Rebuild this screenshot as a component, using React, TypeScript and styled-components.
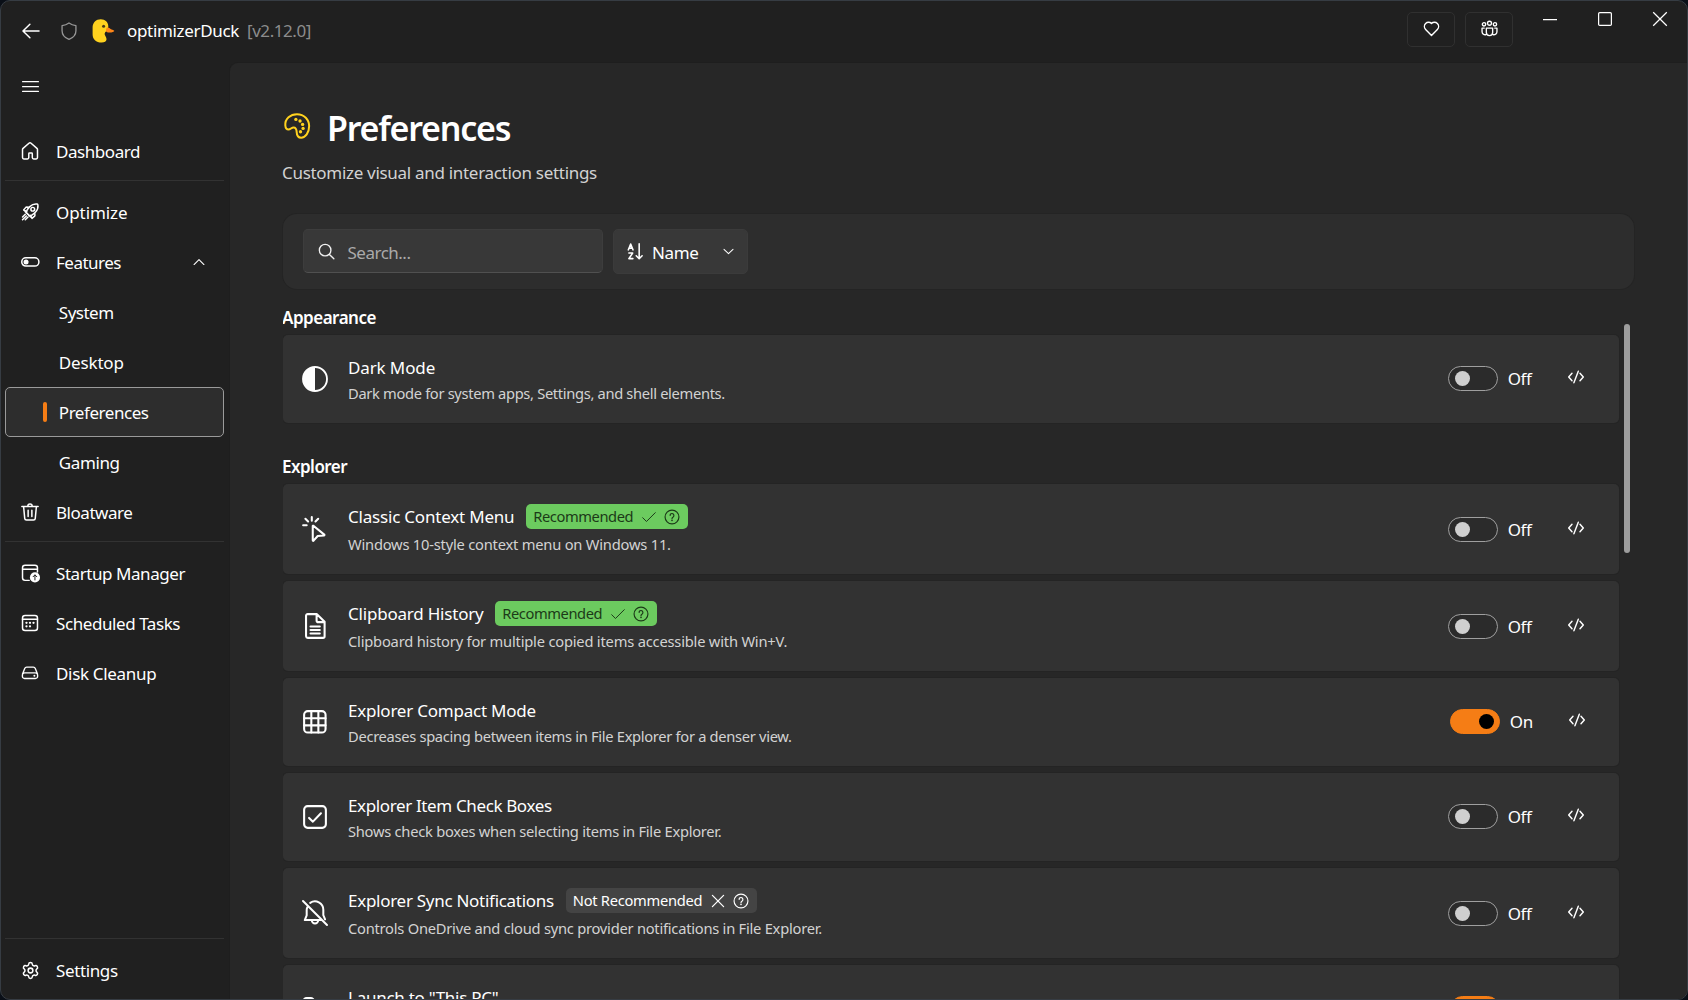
import React from "react";
import styled, { createGlobalStyle, css } from "styled-components";
import { Settings as GearIcon } from "lucide-react";

const c = {
  desk: "#0a0f17",
  window: "#202020",
  frame: "#363c43",
  panel: "#272727",
  seam: "#1e1e1e",
  toolbar: "#2d2d2d",
  field: "#383838",
  card: "#323232",
  line: "#323232",
  text: "#ffffff",
  soft: "#d2d2d2",
  orange: "#f57d15",
  green: "#6ccb5f",
  gold: "#ffd21e",
};

const GlobalStyle = createGlobalStyle`
  *, *::before, *::after { box-sizing: border-box; }
  html, body { margin: 0; background: ${c.desk}; }
  body {
    font-family: "Noto Sans", "Open Sans", sans-serif;
    font-size: 17px;
    line-height: 24px;
    color: ${c.text};
    overflow: hidden;
  }
  svg { display: block; flex: none; }
  button { font: inherit; color: inherit; background: none; border: 0; padding: 0; margin: 0; text-align: left; }
`;

/* ---------- icons ---------- */

const Glyph = styled.svg.attrs<{ $size?: number; $weight?: number }>((p) => ({
  viewBox: "0 0 20 20",
  width: p.$size ?? 22,
  height: p.$size ?? 22,
}))<{ $size?: number; $weight?: number }>`
  fill: none;
  stroke: currentColor;
  stroke-width: ${(p) => p.$weight ?? 1.35};
  stroke-linecap: round;
  stroke-linejoin: round;

  .solid { fill: currentColor; stroke: none; }
`;

const HomeGlyph = () => (
  <Glyph>
    <path d="M9 2.9a1.5 1.5 0 0 1 2 0l5.3 4.7c.32.28.5.69.5 1.12v7.3a1.2 1.2 0 0 1-1.2 1.2h-2.3a1.2 1.2 0 0 1-1.2-1.2v-3.6a.6.6 0 0 0-.6-.6h-2a.6.6 0 0 0-.6.6v3.6a1.2 1.2 0 0 1-1.2 1.2H4.400a1.2 1.2 0 0 1-1.2-1.2v-7.3c0-.43.18-.83.5-1.12L9 2.9Z" />
  </Glyph>
);

const RocketGlyph = () => (
  <Glyph>
    <path d="M7.2 11.2c-.9-1.2.6-4.1 2.6-6.1 2-1.9 4.6-2.6 6.7-2.3.4.1.6.3.7.7.3 2.100-.4 4.700-2.300 6.700-2 2-4.900 3.500-6.100 2.600Z" />
    <circle cx="12.500" cy="7.500" r="1.700" />
    <path d="M8.700 5.700 7 5.500c-.3 0-.6.1-.8.3L4.200 8.200l2.700 1.300M14.300 11.300l.2 1.700c0 .3-.1.6-.3.8l-2.400 2-1.300-2.700M5.500 9.500l5 5M5.700 12l-2.500 2.500M6.700 13.600l-3.500 3.500M8.200 14.600l-2.500 2.500" />
  </Glyph>
);

const ToggleGlyph = () => (
  <Glyph>
    <rect x="2.500" y="6.200" width="15.600" height="7.500" rx="3.750" />
    <circle className="solid" cx="6.400" cy="9.950" r="2.300" />
  </Glyph>
);

const TrashGlyph = () => (
  <Glyph>
    <path d="M2.600 5h14.800M8 4.800a2 2 0 0 1 4 0M4.200 5.200l1 10.600a1.600 1.600 0 0 0 1.600 1.500h6.400a1.600 1.600 0 0 0 1.600-1.500l1-10.600M8.300 8.300v5.800M11.700 8.300v5.800" />
  </Glyph>
);

const StartupGlyph = () => (
  <Glyph>
    <path d="M9.300 16.700H5.500a2.300 2.300 0 0 1-2.300-2.300V5.300A2.300 2.300 0 0 1 5.500 3h9a2.300 2.300 0 0 1 2.300 2.300V9M3.200 6.600h13.600" />
    <circle className="solid" cx="14.500" cy="14" r="4.600" />
    <path stroke="#202020" strokeWidth="0.9" d="M14.500 16.300v-4.400M12.800 13.400l1.700-1.700 1.700 1.700" />
  </Glyph>
);

const CalendarGlyph = () => (
  <Glyph>
    <rect x="3.200" y="3.200" width="13.600" height="13.600" rx="2.300" />
    <path d="M3.200 6.600h13.600" />
    {[[6.800, 9.800], [10, 9.800], [13.200, 9.800], [6.800, 13], [10, 13]].map(([x, y]) => (
      <circle key={`${x}-${y}`} className="solid" cx={x} cy={y} r="1.050" />
    ))}
  </Glyph>
);

const DriveGlyph = () => (
  <Glyph $weight={1.25}>
    <path d="M3.200 10.900 5.200 5.900a1.900 1.900 0 0 1 1.800-1.200h6a1.900 1.900 0 0 1 1.800 1.200l2 5M5 9.900h10a1.900 1.900 0 0 1 1.900 1.900v1.300a1.900 1.900 0 0 1-1.900 1.900H5a1.900 1.900 0 0 1-1.900-1.900v-1.300A1.900 1.900 0 0 1 5 9.900Z" />
    <circle className="solid" cx="14" cy="12.500" r=".9" />
  </Glyph>
);

const BackGlyph = () => (
  <Glyph>
    <path d="M17.300 10H3M9 3.800 2.700 10 9 16.200" />
  </Glyph>
);

const ShieldGlyph = () => (
  <Glyph $weight={1.2}>
    <path d="M10 2.700c1.900 1.400 4.100 2.200 6.300 2.500v4.500c0 3.600-2 6.200-6.300 7.900-4.300-1.700-6.300-4.300-6.300-7.900V5.200C5.900 4.900 8.100 4.100 10 2.700Z" />
  </Glyph>
);

const MenuGlyph = () => (
  <svg width="17" height="11" viewBox="0 0 17 11" fill="#fff">
    <rect width="17" height="1.200" rx=".5" />
    <rect y="5" width="17" height="1.200" rx=".5" />
    <rect y="9.800" width="17" height="1.200" rx=".5" />
  </svg>
);

const DuckLogo = () => (
  <svg width="23" height="24" viewBox="0 0 23 24">
    <path fill="#ffd21e" d="M8.800.3c4.400 0 7.500 3.100 7.500 7 0 2.300-.8 3.800-2.300 5.100-1.300 1.200-1.700 2.200-1 3.800.6 1.400 1.700 2.600 1.500 4.400-.2 1.800-1.900 2.900-4.800 2.900C3.900 23.500.6 20.200.6 15.200V8.500C.6 3.700 4 .3 8.800.3Z" />
    <path fill="#ff8618" d="M15.900 8.500c1.200.2 2.400 1.300 3.700 2.100 1.100.6 2.700.6 2.700 1.500 0 .9-2.400 1.500-4.600 1.500-2 0-3.600-.5-3.700-1.700-.1-1.300.4-3.600 1.900-3.400Z" />
    <circle cx="11.600" cy="7.200" r="1.500" fill="#4a3a18" />
  </svg>
);

const HeartGlyph = () => (
  <Glyph $size={21}>
    <path d="M10 5.300a3.900 3.900 0 0 0-5.600 0 4 4 0 0 0 0 5.600l5.600 5.700 5.600-5.700a4 4 0 0 0 0-5.600 3.900 3.900 0 0 0-5.600 0Z" />
  </Glyph>
);

const PeopleGlyph = () => (
  <Glyph $size={21} $weight={1.3}>
    <circle cx="10" cy="5" r="1.900" />
    <circle cx="4.800" cy="6" r="1.600" />
    <circle cx="15.200" cy="6" r="1.600" />
    <path d="M7 9.600h6v4.200a3 3 0 0 1-6 0ZM5 9.600H2.900v3.200c0 2 1.500 3.300 3.400 3.200M15 9.600h2.100v3.200c0 2-1.500 3.300-3.400 3.200" />
  </Glyph>
);

const PaletteGlyph = () => (
  <Glyph $size={32} $weight={1.25}>
    <path d="M2.700 9.600C2.400 5.500 5.900 2.600 10 2.600c4.500 0 7.600 3.400 7.600 7.400 0 4.300-2.400 7.300-5 7.300-1.900 0-2.700-1.400-2.800-3.500-.1-2.100-.8-2.900-1.900-2.900-1.400 0-1.900 1.300-3.200 1.300-1.200 0-1.900-1.200-2-2.600Z" />
    {[[9.300, 5.900], [11.900, 6.900], [13.500, 9], [13.800, 11.500], [12.200, 13.600]].map(([x, y]) => (
      <circle key={`${x}-${y}`} className="solid" cx={x} cy={y} r="1.050" />
    ))}
  </Glyph>
);

const SearchGlyph = () => (
  <Glyph $size={21} $weight={1.3}>
    <circle cx="8.700" cy="8.700" r="5.500" />
    <path d="m12.800 12.800 4.200 4.200" />
  </Glyph>
);

const SortGlyph = () => (
  <Glyph $size={21} $weight={1.5}>
    <path d="m3.200 8.400 2.200-5.600 2.200 5.600M4 6.800h2.800M3.700 11.500h3.600L3.700 16.800h3.800M13.500 2.600v14M10.700 14.100l2.800 2.800 2.800-2.800" />
  </Glyph>
);

const Chevron = ({ up }: { up?: boolean }) => (
  <Glyph $size={up ? 18 : 17} $weight={1.2}>
    <path d={up ? "m4.500 12.800 5.500-5.500 5.500 5.500" : "M4.700 7.500 10 12.500l5.300-5"} />
  </Glyph>
);

const CheckGlyph = () => (
  <Glyph $size={18} $weight={1.1}>
    <path d="m3 10.800 4.200 4.200 9.800-9.800" />
  </Glyph>
);

const CrossGlyph = () => (
  <Glyph $size={18} $weight={1.4}>
    <path d="m3.800 3.800 12.400 12.400M16.200 3.800 3.800 16.200" />
  </Glyph>
);

const HelpGlyph = () => (
  <Glyph $size={18} $weight={1.3}>
    <circle cx="10" cy="10" r="7.700" />
    <path d="M7.900 8.200a2.100 2.100 0 1 1 3.400 1.700c-.8.600-1.300 1-1.300 1.900" />
    <circle className="solid" cx="10" cy="13.800" r=".9" />
  </Glyph>
);

const CodeGlyph = () => (
  <Glyph $size={20} $weight={1.45}>
    <path d="M6 6.200 2.700 10 6 13.800M14 6.200l3.300 3.800-3.300 3.800M12.300 4.300 7.900 15.700" />
  </Glyph>
);

const ContrastGlyph = () => (
  <Glyph $size={32} $weight={1.15}>
    <circle cx="10" cy="10" r="7.500" />
    <path className="solid" d="M10 2.500a7.500 7.500 0 0 0 0 15Z" />
  </Glyph>
);

const ClickGlyph = () => (
  <Glyph $size={32} $weight={1.3}>
    <path d="M8.600 8.200v8.900c0 .3.300.400.5.200l2.600-2.900 3.900-.3c.3 0 .4-.4.2-.6L9 8c-.2-.100-.4 0-.4.200Z" />
    <path d="M2.600 7.700h2.200M4 3.600l1.700 1.700M8 2.500v2.300M12 3.600l-1.700 1.700" />
  </Glyph>
);

const DocumentGlyph = () => (
  <Glyph $size={32} $weight={1.3}>
    <path d="M5.500 2.600h5.700l4.800 4.800v9a1 1 0 0 1-1 1H5.500a1.100 1.100 0 0 1-1.100-1V3.600a1 1 0 0 1 1.100-1ZM11 2.800v3.700a1.100 1.100 0 0 0 1.100 1.100h3.700M7.200 10.300h5.800M7.200 12.500h5.800M7.200 14.700h5.800" />
  </Glyph>
);

const GridGlyph = () => (
  <Glyph $size={32} $weight={1.3}>
    <rect x="3.200" y="3.200" width="13.400" height="13.400" rx="2.300" />
    <path d="M7.700 3.200v13.400M12.100 3.200v13.400M3.200 7.700h13.400M3.200 12.100h13.400" />
  </Glyph>
);

const CheckboxGlyph = () => (
  <Glyph $size={32} $weight={1.3}>
    <rect x="3.200" y="3.200" width="13.600" height="13.600" rx="2.200" />
    <path d="m6.300 10.600 2.400 2.300 5-5.200" />
  </Glyph>
);

const BellOffGlyph = () => (
  <Glyph $size={32} $weight={1.25}>
    <path d="m2.500 2.500 15 15M7 3.700a5.200 5.200 0 0 1 8.200 4.300v3.300l1.100 2.700M5.300 6.200c-.3.600-.5 1.200-.5 2v3.300l-1.200 2.900h9.900M8 14.600a2 2 0 0 0 4 0" />
  </Glyph>
);

const FolderGlyph = () => (
  <Glyph $size={32} $weight={1.3}>
    <path d="M2.600 5.400A2.200 2.200 0 0 1 4.800 3.200h2.500c.5 0 1 .2 1.400.6l1.400 1.400h5.200a2.200 2.200 0 0 1 2.200 2.200v7a2.200 2.200 0 0 1-2.200 2.200H4.800a2.200 2.200 0 0 1-2.200-2.200Z" />
  </Glyph>
);

/* ---------- window frame ---------- */

const Window = styled.div`
  width: 1688px;
  height: 1000px;
  display: flex;
  flex-direction: column;
  background: ${c.window};
  border: 1px solid ${c.frame};
  border-radius: 10px;
  overflow: hidden;
`;

const TitleBar = styled.header`
  flex: none;
  height: 61px;
  display: flex;
  align-items: flex-start;
`;

const TitleLead = styled.div`
  flex: 1;
  display: flex;
  align-items: center;
  height: 59px;
  padding-left: 19px;
`;

const ShieldSlot = styled.span`
  margin: 0 12px 0 15.5px;
  color: #969696;
`;

const AppName = styled.span`
  margin: 0 8px 0 12.5px;
  letter-spacing: -0.33px;
`;

const Version = styled.span`
  color: #8c8c8c;
  letter-spacing: -0.44px;
`;

const HeaderActions = styled.div`
  display: flex;
  gap: 10px;
  padding-top: 11px;
`;

const HeaderButton = styled.button`
  width: 48px;
  height: 35px;
  display: grid;
  place-items: center;
  padding-bottom: 3px;
  border: 1px solid #303030;
  border-radius: 5px;
`;

const WindowControls = styled.div`
  display: flex;
  margin-left: 9px;
`;

const WindowButton = styled.button`
  width: 55px;
  height: 36px;
  display: grid;
  place-items: center;
`;

const CaptionGlyph = styled.svg.attrs({ width: 16, height: 16, viewBox: "0 0 16 16" })`
  fill: none;
  stroke: #fff;
  stroke-width: 1.25;
`;

const Body = styled.div`
  flex: 1;
  min-height: 0;
  display: flex;
`;

/* ---------- sidebar ---------- */

const Sidebar = styled.nav`
  flex: none;
  width: 228px;
  display: flex;
  flex-direction: column;
  padding: 0 5px 4px 4px;
`;

const MenuButton = styled.button`
  width: 50px;
  height: 49px;
  margin-bottom: 15px;
  padding-left: 17px;
  display: flex;
  align-items: center;
`;

const NavItem = styled.a<{ $active?: boolean; $sub?: boolean }>`
  flex: none;
  height: 50px;
  display: flex;
  align-items: center;
  padding: 0 15px 0 ${(p) => (p.$sub ? 37 : 13)}px;
  border: 1px solid transparent;
  border-radius: 5px;
  ${(p) =>
    p.$active &&
    css`
      background: #2d2d2d;
      border-color: #9a9a9a;
    `}
`;

const NavIcon = styled.span`
  width: 22px;
  display: grid;
  place-items: center;
`;

const NavLabel = styled.span<{ $track: number; $sub?: boolean }>`
  flex: 1;
  margin: 2px 0 0 ${(p) => (p.$sub ? 11.8 : 15)}px;
  letter-spacing: ${(p) => p.$track}px;
  white-space: nowrap;
`;

const ActiveMark = styled.span<{ $on?: boolean }>`
  width: 4px;
  height: 20px;
  border-radius: 2px;
  background: ${(p) => (p.$on ? c.orange : "transparent")};
`;

const Divider = styled.hr<{ $bottom?: boolean }>`
  flex: none;
  width: 100%;
  height: 1px;
  border: 0;
  margin: ${(p) => (p.$bottom ? "auto 0 6px" : "4px 0 6px")};
  background: ${c.line};
`;

type NavEntry = { label: string; track: number; icon?: React.ReactNode; active?: boolean; open?: boolean };

const navTop: NavEntry[] = [{ label: "Dashboard", track: -0.44, icon: <HomeGlyph /> }];

const navMain: NavEntry[] = [
  { label: "Optimize", track: -0.08, icon: <RocketGlyph /> },
  { label: "Features", track: -0.5, icon: <ToggleGlyph />, open: true },
  { label: "System", track: -0.5 },
  { label: "Desktop", track: -0.16 },
  { label: "Preferences", track: -0.45, active: true },
  { label: "Gaming", track: -0.4 },
  { label: "Bloatware", track: -0.46, icon: <TrashGlyph /> },
];

const navTools: NavEntry[] = [
  { label: "Startup Manager", track: -0.44, icon: <StartupGlyph /> },
  { label: "Scheduled Tasks", track: -0.42, icon: <CalendarGlyph /> },
  { label: "Disk Cleanup", track: -0.32, icon: <DriveGlyph /> },
];

const navBottom: NavEntry[] = [
  { label: "Settings", track: -0.37, icon: <GearIcon size={19} strokeWidth={1.9} /> },
];

const NavGroup = ({ items }: { items: NavEntry[] }) => (
  <>
    {items.map((n) => (
      <NavItem key={n.label} $active={n.active} $sub={!n.icon}>
        {n.icon ? <NavIcon>{n.icon}</NavIcon> : <ActiveMark $on={n.active} />}
        <NavLabel $track={n.track} $sub={!n.icon}>{n.label}</NavLabel>
        {n.open && <Chevron up />}
      </NavItem>
    ))}
  </>
);

/* ---------- page ---------- */

const Page = styled.main`
  flex: 1;
  min-width: 0;
  display: flex;
  flex-direction: column;
  padding: 42px 53px 0 53px;
  background: ${c.panel};
  border: 1px solid ${c.seam};
  border-width: 1px 0 0 1px;
  border-top-left-radius: 9px;
  overflow: hidden;
`;

const Heading = styled.div`
  display: flex;
  height: 48px;
  gap: 14px;
  color: ${c.gold};

  svg { margin: 5px 0 0 -2px; }
`;

const Title = styled.h1`
  margin: 0;
  font-size: 34px;
  line-height: 46px;
  font-weight: 600;
  letter-spacing: -1.23px;
  color: ${c.text};
`;

const Subtitle = styled.p`
  margin: 8px 0 0 -1px;
  height: 24px;
  color: ${c.soft};
  letter-spacing: -0.3px;
`;

const Toolbar = styled.section`
  flex: none;
  height: 75px;
  margin-top: 29px;
  padding: 15px 20px;
  display: flex;
  align-items: flex-start;
  gap: 10px;
  background: ${c.toolbar};
  border-radius: 14px;
  box-shadow: 0 0 0 1px #242424;
`;

const SearchField = styled.div`
  width: 300px;
  height: 44px;
  display: flex;
  align-items: center;
  gap: 10.5px;
  padding: 0 0 0 12px;
  background: ${c.field};
  border: 1px solid #3d3d3d;
  border-bottom-color: #505050;
  border-radius: 5px;
  color: #f0f0f0;
`;

const Placeholder = styled.span`
  margin-top: 3px;
  color: #aaaaaa;
  letter-spacing: -0.5px;
`;

const SortButton = styled.button`
  width: 135px;
  height: 45px;
  display: flex;
  align-items: center;
  padding: 0 10px 0 11px;
  background: ${c.field};
  border: 1px solid #3b3b3b;
  border-radius: 5px;
  letter-spacing: -0.35px;
`;

const SortText = styled.span`
  flex: 1;
  margin: 2px 0 0 6px;
`;

const Scroller = styled.div`
  flex: 1;
  min-height: 0;
  display: flex;
  margin-top: 17px;
  overflow: hidden;
`;

const List = styled.div`
  flex: none;
  width: 1336px;
`;

const ScrollThumb = styled.div`
  flex: none;
  width: 6px;
  height: 229px;
  margin: 18px 0 0 5px;
  border-radius: 3px;
  background: #9e9e9e;
`;

const GroupTitle = styled.h2<{ $track: number; $first?: boolean }>`
  margin: ${(p) => (p.$first ? 0 : 32)}px 0 5px -1px;
  font-size: 17px;
  line-height: 24px;
  font-weight: 600;
  letter-spacing: ${(p) => p.$track}px;
`;

const Card = styled.article<{ $tall?: boolean }>`
  height: ${(p) => (p.$tall ? 90 : 88)}px;
  display: flex;
  align-items: center;
  padding-left: 16px;
  background: ${c.card};
  border-radius: 5px;
  box-shadow: 0 0 0 1px #242424;

  & + & { margin-top: 7px; }
`;

const CardBody = styled.div`
  flex: 1;
  align-self: flex-start;
  padding: 20px 0 0 17px;
`;

const CardHead = styled.div<{ $tall?: boolean }>`
  display: flex;
  align-items: flex-start;
  height: ${(p) => (p.$tall ? 26 : 24)}px;
  gap: 11.8px;
`;

const CardTitle = styled.span<{ $track: number }>`
  margin-top: 1px;
  letter-spacing: ${(p) => p.$track}px;
  white-space: nowrap;
`;

const CardText = styled.p<{ $track: number }>`
  margin: 4px 0 0;
  font-size: 14.7px;
  line-height: 20px;
  letter-spacing: ${(p) => p.$track}px;
  color: ${c.soft};
`;

const Badge = styled.span<{ $good: boolean }>`
  width: ${(p) => (p.$good ? 162 : 191)}px;
  height: 25px;
  display: flex;
  align-items: center;
  justify-content: space-between;
  padding: 0 7px;
  border-radius: 5px;
  font-size: 14.7px;
  line-height: 25px;
  background: ${(p) => (p.$good ? c.green : "#444444")};
  color: ${(p) => (p.$good ? "#1c3a18" : "#ffffff")};
`;

const BadgeText = styled.span<{ $good: boolean }>`
  letter-spacing: ${(p) => (p.$good ? -0.42 : -0.27)}px;
`;

const BadgeIcons = styled.span<{ $good: boolean }>`
  display: flex;
  gap: ${(p) => (p.$good ? 5.5 : 5)}px;
`;

const Controls = styled.div<{ $on?: boolean; $tall?: boolean }>`
  display: flex;
  align-items: center;
  margin-top: ${(p) => (p.$tall ? 0 : -2)}px;
  padding-right: ${(p) => (p.$on ? 32 : 33)}px;
`;

const Switch = styled.button<{ $on?: boolean }>`
  width: 50px;
  height: 25px;
  display: flex;
  align-items: center;
  justify-content: ${(p) => (p.$on ? "flex-end" : "flex-start")};
  padding: 0 ${(p) => (p.$on ? 5 : 6)}px;
  border: 1px solid ${(p) => (p.$on ? c.orange : "#9f9f9f")};
  border-radius: 13px;
  background: ${(p) => (p.$on ? c.orange : "#2b2b2b")};
`;

const Knob = styled.span<{ $on?: boolean }>`
  width: 15px;
  height: 15px;
  border-radius: 50%;
  background: ${(p) => (p.$on ? "#000000" : "#cfcfcf")};
`;

const SwitchLabel = styled.span<{ $on?: boolean }>`
  width: ${(p) => (p.$on ? 57.3 : 58.3)}px;
  margin: 2px 0 0 10px;
  letter-spacing: ${(p) => (p.$on ? -0.28 : -0.4)}px;
`;

const CodeSlot = styled.span`
  margin-top: -3px;
`;

type Setting = {
  icon: React.ReactNode;
  title: string;
  track: number;
  text: string;
  textTrack: number;
  badge?: "Recommended" | "Not Recommended";
  on?: boolean;
};

const appearance: Setting[] = [
  { icon: <ContrastGlyph />, title: "Dark Mode", track: -0.12, text: "Dark mode for system apps, Settings, and shell elements.", textTrack: -0.33 },
];

const explorer: Setting[] = [
  { icon: <ClickGlyph />, title: "Classic Context Menu", track: -0.2, text: "Windows 10-style context menu on Windows 11.", textTrack: -0.21, badge: "Recommended" },
  { icon: <DocumentGlyph />, title: "Clipboard History", track: -0.21, text: "Clipboard history for multiple copied items accessible with Win+V.", textTrack: -0.2, badge: "Recommended" },
  { icon: <GridGlyph />, title: "Explorer Compact Mode", track: -0.23, text: "Decreases spacing between items in File Explorer for a denser view.", textTrack: -0.31, on: true },
  { icon: <CheckboxGlyph />, title: "Explorer Item Check Boxes", track: -0.37, text: "Shows check boxes when selecting items in File Explorer.", textTrack: -0.26 },
  { icon: <BellOffGlyph />, title: "Explorer Sync Notifications", track: -0.28, text: "Controls OneDrive and cloud sync provider notifications in File Explorer.", textTrack: -0.24, badge: "Not Recommended" },
  { icon: <FolderGlyph />, title: 'Launch to "This PC"', track: -0.27, text: "Opens File Explorer to This PC.", textTrack: -0.25, on: true },
];

const SettingCard = ({ s }: { s: Setting }) => {
  const tall = !!s.badge;
  const good = s.badge === "Recommended";
  return (
    <Card $tall={tall}>
      {s.icon}
      <CardBody>
        <CardHead $tall={tall}>
          <CardTitle $track={s.track}>{s.title}</CardTitle>
          {s.badge && (
            <Badge $good={good}>
              <BadgeText $good={good}>{s.badge}</BadgeText>
              <BadgeIcons $good={good}>
                {good ? <CheckGlyph /> : <CrossGlyph />}
                <HelpGlyph />
              </BadgeIcons>
            </Badge>
          )}
        </CardHead>
        <CardText $track={s.textTrack}>{s.text}</CardText>
      </CardBody>
      <Controls $on={s.on} $tall={tall}>
        <Switch $on={s.on}><Knob $on={s.on} /></Switch>
        <SwitchLabel $on={s.on}>{s.on ? "On" : "Off"}</SwitchLabel>
        <CodeSlot><CodeGlyph /></CodeSlot>
      </Controls>
    </Card>
  );
};

export default function App() {
  return (
    <>
      <GlobalStyle />
      <Window>
        <TitleBar>
          <TitleLead>
            <BackGlyph />
            <ShieldSlot><ShieldGlyph /></ShieldSlot>
            <DuckLogo />
            <AppName>optimizerDuck</AppName>
            <Version>[v2.12.0]</Version>
          </TitleLead>
          <HeaderActions>
            <HeaderButton><HeartGlyph /></HeaderButton>
            <HeaderButton><PeopleGlyph /></HeaderButton>
          </HeaderActions>
          <WindowControls>
            <WindowButton><CaptionGlyph><path d="M1 8.500h14" /></CaptionGlyph></WindowButton>
            <WindowButton><CaptionGlyph><rect x="1.600" y="1.600" width="12.800" height="12.800" rx="1.200" /></CaptionGlyph></WindowButton>
            <WindowButton><CaptionGlyph><path d="m1.200 1.200 13.600 13.600M14.800 1.200 1.200 14.800" /></CaptionGlyph></WindowButton>
          </WindowControls>
        </TitleBar>
        <Body>
          <Sidebar>
            <MenuButton><MenuGlyph /></MenuButton>
            <NavGroup items={navTop} />
            <Divider />
            <NavGroup items={navMain} />
            <Divider />
            <NavGroup items={navTools} />
            <Divider $bottom />
            <NavGroup items={navBottom} />
          </Sidebar>
          <Page>
            <Heading>
              <PaletteGlyph />
              <Title>Preferences</Title>
            </Heading>
            <Subtitle>Customize visual and interaction settings</Subtitle>
            <Toolbar>
              <SearchField>
                <SearchGlyph />
                <Placeholder>Search...</Placeholder>
              </SearchField>
              <SortButton>
                <SortGlyph />
                <SortText>Name</SortText>
                <Chevron />
              </SortButton>
            </Toolbar>
            <Scroller>
              <List>
                <GroupTitle $first $track={-0.5}>Appearance</GroupTitle>
                {appearance.map((s) => <SettingCard key={s.title} s={s} />)}
                <GroupTitle $track={-0.52}>Explorer</GroupTitle>
                {explorer.map((s) => <SettingCard key={s.title} s={s} />)}
              </List>
              <ScrollThumb />
            </Scroller>
          </Page>
        </Body>
      </Window>
    </>
  );
}
